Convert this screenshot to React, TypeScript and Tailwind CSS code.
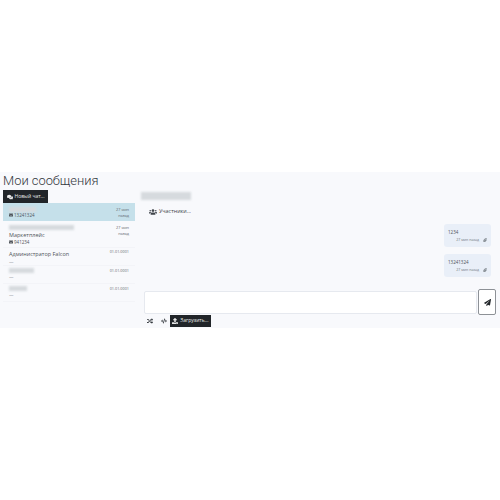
import { FaCode, FaComments, FaPaperPlane, FaPaperclip, FaRandom, FaUpload, FaUsers, FaEnvelope } from "react-icons/fa";

const chats = [
  { blur: "w-[27px]", title: "", sub: "13241324", mail: true, time: "27 мин", ago: "назад", active: true, h: "h-[18px] pt-[4px]" },
  { blur: "w-[65px]", title: "Маркетплейс", sub: "941234", mail: true, time: "27 мин", ago: "назад", active: false, h: "h-[27px] pt-[4px]" },
  { blur: "", title: "Администратор Falcon", sub: "—", mail: false, time: "01.01.0001", ago: "", active: false, h: "h-[18px] pt-[0.5px]" },
  { blur: "w-[25px]", title: "", sub: "—", mail: false, time: "01.01.0001", ago: "", active: false, h: "h-[18px] pt-[2px]" },
  { blur: "w-[18px]", title: "", sub: "—", mail: false, time: "01.01.0001", ago: "", active: false, h: "h-[18px] pt-[2px]" },
];

const messages = ["1234", "13241324"];

function Blur({ className }: { className: string }) {
  return <div className={`bg-[#d6dade] blur-[1px] ${className}`} />;
}

export default function App() {
  return (
    <div className="w-[500px] h-[500px] bg-white pt-[172px] font-['Open_Sans',sans-serif] text-[#4f545a] overflow-hidden">
      <div className="h-[156px] bg-[#f8f9fc] flex">
        {/* sidebar */}
        <div className="w-[141px] pl-[3px] pr-[6px] shrink-0">
          <h1 className="font-['Roboto',sans-serif] font-light text-[12.9px] leading-[18px] text-[#33383d] whitespace-nowrap">Мои сообщения</h1>
          <button className="h-[13px] w-[45px] bg-[#212529] text-[#e8e8e8] text-[5px] flex items-center justify-center gap-[2px]">
            <FaComments size={6} />
            Новый чат...
          </button>
          <div className="flex flex-col">
            {chats.map((chat, i) => (
              <div
                key={i}
                className={`${chat.h} flex justify-between pl-[6px] pr-[6px] ${chat.active ? "bg-[#c5e0ea]" : "border-b border-[#f3f4f8]"}`}
              >
                <div className="min-w-0">
                  {chat.blur && <Blur className={`h-[5px] ${chat.blur}`} />}
                  {chat.title && <div className="text-[5.5px] leading-[8px] whitespace-nowrap mt-[1px]">{chat.title}</div>}
                  <div className={`text-[4.5px] leading-[6px] whitespace-nowrap flex items-center gap-[1px] ${chat.mail ? "" : "mt-[1px] text-[#8a8f95]"}`}>
                    {chat.mail && <FaEnvelope size={4} />}
                    {chat.sub}
                  </div>
                </div>
                <div className="text-[3.8px] leading-[6px] text-right whitespace-nowrap text-[#5f656b]">
                  <div>{chat.time}</div>
                  {chat.ago && <div>{chat.ago}</div>}
                </div>
              </div>
            ))}
          </div>
        </div>

        {/* chat */}
        <div className="flex-1 flex flex-col">
          <Blur className="mt-[20px] h-[8px] w-[50px]" />
          <div className="mt-[7px] ml-[8px] flex items-center gap-[2px] text-[5.4px] leading-[9px] text-[#3f444a]">
            <FaUsers size={8} />
            Участники...
          </div>
          <div className="mt-[8px] pr-[9px] flex flex-col items-end gap-[7px]">
            {messages.map((text) => (
              <div key={text} className="w-[47px] h-[23px] rounded-[3px] bg-[#e9eff8] px-[4px] pt-[5px]">
                <div className="text-[4.5px] leading-[6px]">{text}</div>
                <div className="mt-[2px] flex justify-end items-center gap-[4px] text-[3.5px] leading-[5px] text-[#6b7278]">
                  27 мин назад
                  <FaPaperclip size={4} />
                </div>
              </div>
            ))}
          </div>
          <div className="mt-[12px] ml-[3px] flex items-start">
            <div className="mt-[2px] w-[333px] h-[23px] bg-white border border-[#e6e9ef] rounded-[2px]" />
            <button className="w-[18px] h-[26px] ml-px bg-white border border-[#8d9196] rounded-[2px] flex items-center justify-center">
              <FaPaperPlane size={7} color="#212529" />
            </button>
          </div>
          <div className="ml-[3px] flex items-center h-[12px]">
            <FaRandom size={6} className="ml-[3px] text-[#33383d]" />
            <FaCode size={6} className="ml-[8px] text-[#33383d]" />
            <button className="ml-[3px] w-[41px] h-[12px] bg-[#212529] text-[#e8e8e8] text-[5px] flex items-center justify-center gap-[2px]">
              <FaUpload size={6} />
              Загрузить...
            </button>
          </div>
        </div>
      </div>
    </div>
  );
}
